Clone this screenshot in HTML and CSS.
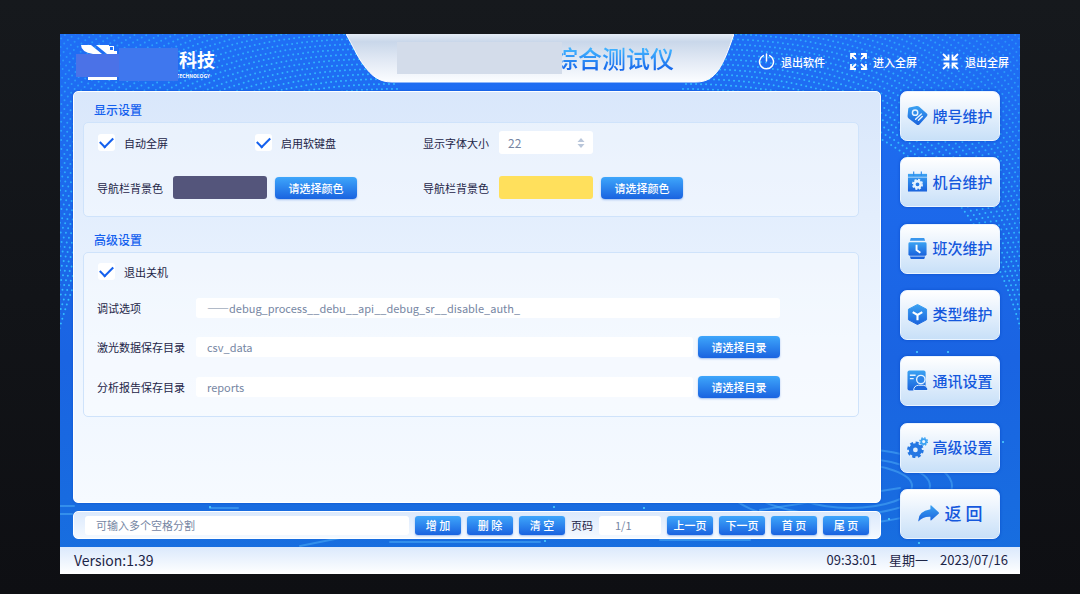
FILE: index.html
```html
<!DOCTYPE html>
<html lang="zh-CN">
<head>
  <meta charset="UTF-8">
  <title>综合测试仪</title>
  <link rel="stylesheet" href="styles.css">
</head>
<body>
  <div class="app">
    <svg class="backdrop" viewBox="0 0 960 540" preserveAspectRatio="none" aria-hidden="true">
      <g id="dots-right"></g>
      <g id="dots-left" transform="translate(960 0) scale(-1 1)"></g>
      <g class="ripples">
        <ellipse cx="790" cy="452" rx="62" ry="22"/>
        <ellipse cx="780" cy="452" rx="90" ry="29"/>
        <ellipse cx="780" cy="452" rx="112" ry="38"/>
        <path d="M0 472H14M0 480H12M150 474H178M330 508H480M700 476L840 454M240 512l40-8M600 506h90M905 484h25M895 492h30"/>
      </g>
      <g class="sparks">
        <circle cx="150" cy="473" r="1"/><circle cx="494" cy="473" r="1"/><circle cx="584" cy="474" r="1"/>
        <circle cx="829" cy="485" r="1"/><circle cx="859" cy="509" r="1"/><circle cx="888" cy="318" r="1"/>
        <circle cx="857" cy="318" r="1"/><circle cx="943" cy="408" r="1"/><circle cx="485" cy="507" r="1"/>
      </g>
    </svg>

    <header class="header">
      <div class="logo">
        <svg class="logo-mark" width="102" height="40" viewBox="0 0 102 40">
          <path fill="#fff" d="M5 3h10l11 9H17Q5 10 5 3zM20 3h13v1h5v5h3v3H31zM34 5v3h3V5z" fill-rule="evenodd"/>
          <path fill="#fff" d="M12 34h29v4H12z"/>
          <path fill="#4b72e7" d="M0 12h49v23H0z"/>
          <path fill="#3f77ee" d="M43 6h59v33H43z"/>
        </svg>
        <div class="logo-text">
          <span class="logo-name">科技</span>
          <span class="logo-sub">TECHNOLOGY</span>
        </div>
      </div>
      <div class="banner">
        <svg class="banner-shape" viewBox="0 0 388 49" preserveAspectRatio="none" aria-hidden="true">
          <defs>
            <linearGradient id="bannerFill" x1="0" y1="0" x2="0" y2="1">
              <stop offset="0" stop-color="#e4ecf6"/><stop offset=".16" stop-color="#c9d7ea"/>
              <stop offset=".5" stop-color="#dfe7f3"/><stop offset="1" stop-color="#fbfdff"/>
            </linearGradient>
          </defs>
          <path fill="url(#bannerFill)" stroke="#fff" d="M0 0C7 12 11 22 17 30C26 43 34 48 46 48H350C370 48 377 32 388 0"/>
        </svg>
        <span class="mask"></span>
        <h1>综合测试仪</h1>
      </div>
      <nav class="actions">
        <button>
          <svg width="17" height="17" viewBox="0 0 17 17" fill="none" stroke="#fff" stroke-width="1.5" stroke-linecap="round"><path d="M5.3 2.6A7 7 0 1 0 11.7 2.6M8.5 1v7"/></svg>
          退出软件
        </button>
        <button>
          <svg width="17" height="17" viewBox="0 0 17 17" fill="none" stroke="#fff" stroke-width="1.8"><path d="M1 6V1h5M1 1l5 5M11 1h5v5M16 1l-5 5M1 11v5h5M1 16l5-5M16 11v5h-5M16 16l-5-5"/></svg>
          进入全屏
        </button>
        <button>
          <svg width="17" height="17" viewBox="0 0 17 17" fill="none" stroke="#fff" stroke-width="1.8"><path d="M6.5 1.500v5h-5M6.500 6.500L1 1M10.500 1.500v5h5M10.500 6.500L16 1M6.500 15.500v-5h-5M6.500 10.500L1 16M10.500 15.500v-5h5M10.500 10.500L16 16"/></svg>
          退出全屏
        </button>
      </nav>
    </header>

    <div class="body">
      <div class="content">
        <main class="panel">
          <h2>显示设置</h2>
          <section class="group display-group">
            <label class="check"><input type="checkbox" checked>自动全屏</label>
            <label class="check"><input type="checkbox" checked>启用软键盘</label>
            <div class="field">
              <label for="fontSize">显示字体大小</label>
              <div class="spinner">
                <input id="fontSize" type="text" inputmode="numeric" value="22">
                <svg width="8" height="10" viewBox="0 0 8 10" fill="#b9c6da"><path d="M4 0l3.500 4h-7zM4 10l3.500-4h-7z"/></svg>
              </div>
            </div>
            <div class="field wide">
              <span>导航栏背景色</span>
              <span class="swatch swatch-purple"></span>
              <button class="btn btn-pick">请选择颜色</button>
            </div>
            <div class="field">
              <span>导航栏背景色</span>
              <span class="swatch swatch-yellow"></span>
              <button class="btn btn-pick">请选择颜色</button>
            </div>
          </section>

          <h2>高级设置</h2>
          <section class="group advanced-group">
            <label class="check"><input type="checkbox" checked>退出关机</label>
            <div class="path-row">
              <label for="debug">调试选项</label>
              <input id="debug" type="text" value="——debug_process__debu__api__debug_sr__disable_auth_">
            </div>
            <div class="path-row">
              <label for="csvDir">激光数据保存目录</label>
              <input id="csvDir" type="text" value="csv_data">
              <button class="btn btn-pick">请选择目录</button>
            </div>
            <div class="path-row">
              <label for="reportDir">分析报告保存目录</label>
              <input id="reportDir" type="text" value="reports">
              <button class="btn btn-pick">请选择目录</button>
            </div>
          </section>
        </main>

        <div class="toolbar">
          <input class="search" type="text" placeholder="可输入多个空格分割" aria-label="关键字">
          <button class="btn">增 加</button>
          <button class="btn">删 除</button>
          <button class="btn">清 空</button>
          <label for="page">页码</label>
          <input id="page" class="page" type="text" value="1/1">
          <button class="btn">上一页</button>
          <button class="btn">下一页</button>
          <button class="btn">首 页</button>
          <button class="btn">尾 页</button>
        </div>
      </div>

      <nav class="sidebar">
        <button>
          <svg viewBox="0 0 22 22">
            <defs>
              <linearGradient id="ico" x1="0" y1="0" x2="0" y2="1"><stop offset="0" stop-color="#3ba2f2"/><stop offset="1" stop-color="#1a63dd"/></linearGradient>
            </defs>
            <path fill="url(#ico)" d="M2.500 2.500L10 1q1.500-.3 2.500.7l8.500 7.500q1 1 0 2.200l-8 8.900q-1.500 1.300-3 0L1.500 14q-1-1-.9-2.500l.7-7.500q.1-1.300 1.200-1.500z"/>
            <g fill="none" stroke="#e6f3ff" stroke-width="1.500" stroke-linecap="round"><circle cx="8.500" cy="8" r="2.800"/><path d="M9 15l6-5.500M12 16l4-4"/></g>
          </svg>
          牌号维护
        </button>
        <button>
          <svg viewBox="0 0 22 22">
            <path fill="url(#ico)" d="M1 3h20v18.500H1z"/>
            <path stroke="#e6f3ff" stroke-width=".7" d="M1 6.500h20"/>
            <path stroke="#2f8cec" stroke-width="1.200" d="M7 .5V5M15 .5V5"/>
            <circle cx="11" cy="14" r="3.300" fill="none" stroke="#e6f3ff" stroke-width="2.600"/>
            <circle cx="11" cy="14" r="4.900" fill="none" stroke="#e6f3ff" stroke-width="1.800" stroke-dasharray="2.200 1.648"/>
          </svg>
          机台维护
        </button>
        <button>
          <svg viewBox="0 0 22 22">
            <path fill="#3996ed" d="M4 0h14l1 3H3z"/><path fill="#1a63dd" d="M3 19.500h16l-1 2.500H4z"/>
            <rect x="1.500" y="4.500" width="19" height="14" rx="1.500" fill="url(#ico)"/>
            <path fill="none" stroke="#fff" stroke-width="2" d="M10 7v5.500l4 3"/>
          </svg>
          班次维护
        </button>
        <button>
          <svg viewBox="0 0 22 22">
            <path fill="url(#ico)" stroke="url(#ico)" stroke-linejoin="round" d="M11 .5l9.500 5v11L11 21.500 1.500 16.500v-11z"/>
            <path fill="none" stroke="#fff" stroke-width="2.200" d="M6 8.500l5 3 5-3M11 11.500v5.500"/>
          </svg>
          类型维护
        </button>
        <button>
          <svg viewBox="0 0 22 22">
            <rect x=".5" y=".5" width="19" height="21" rx="2" fill="url(#ico)"/>
            <path stroke="#e6f3ff" stroke-width="1.400" d="M3 5.500h6M3 9h4"/>
            <circle cx="14.500" cy="10" r="4.400" fill="#2c84e8" stroke="#e6f3ff" stroke-width="1.400"/>
            <path fill="#1d69de" stroke="#e6f3ff" d="M7 21.500q0-5 5-5.500h5q4.500.5 5 5.500z"/>
          </svg>
          通讯设置
        </button>
        <button>
          <svg viewBox="0 0 22 22">
            <circle cx="8.800" cy="13.500" r="4.700" fill="none" stroke="#2577e3" stroke-width="4.400"/>
            <circle cx="8.800" cy="13.500" r="7.300" fill="none" stroke="#2577e3" stroke-width="2.800" stroke-dasharray="3.200 2.533"/>
            <circle cx="17.500" cy="4.800" r="2.600" fill="none" stroke="#3ba2f2" stroke-width="1.800"/>
            <circle cx="17.500" cy="4.800" r="3.900" fill="none" stroke="#3ba2f2" stroke-width="1.500" stroke-dasharray="1.600 1.463"/>
          </svg>
          高级设置
        </button>
        <button class="back">
          <svg viewBox="0 0 22 22"><path fill="url(#ico)" d="M13 3q0-1 1-.3l7.600 7q.8.8 0 1.600L14 18q-1 .6-1-.4v-3.200Q5 14 .4 19.500-.5 9 13 6.600z"/></svg>
          返 回
        </button>
      </nav>
    </div>

    <footer class="statusbar">
      <span class="version">Version:1.39</span>
      <span>09:33:01</span>
      <span>星期一</span>
      <span>2023/07/16</span>
    </footer>
  </div>

  <script>
    // dotted waves in the upper corners, the left side mirrors the right one
    function drawWaves(id) {
      const group = document.getElementById(id);
      for (let k = 0; k < 50; k++) {
        const path = document.createElementNS("http://www.w3.org/2000/svg", "path");
        path.setAttribute("d", "M620 60C780 60 915 120 962 300");
        path.setAttribute("transform", `translate(${k * 3} ${-k * 5})`);
        path.setAttribute("opacity", Math.max(0.45, 1 - k * 0.02));
        group.appendChild(path);
      }
    }
    drawWaves("dots-right");
    drawWaves("dots-left");
  </script>
</body>
</html>
```
FILE: styles.css
```css
* {
  box-sizing: border-box;
}
body {
  margin: 0;
  min-height: 100vh;
  padding: 34px 60px 20px;
  display: flex;
  background: linear-gradient(#16191d, #0e0f13);
  font-family: "Noto Sans CJK SC", sans-serif;
  font-size: 11px;
  line-height: 16px;
  color: #1d2547;
}
button,
input {
  font: inherit;
  border: none;
  padding: 0;
  margin: 0;
}
button {
  cursor: pointer;
}
.app {
  position: relative;
  flex: 1;
  display: flex;
  flex-direction: column;
  overflow: hidden;
  background: linear-gradient(#1f6ef5, #1a64e2 60%, #176fdf);
}

/* backdrop */
.backdrop {
  position: absolute;
  top: 0;
  left: 0;
  width: 100%;
  height: 100%;
}
.backdrop path {
  fill: none;
  stroke: #33bdff;
  stroke-width: 2;
  stroke-linecap: round;
  stroke-dasharray: 0 5;
}
.backdrop .ripples ellipse,
.backdrop .ripples path {
  fill: none;
  stroke: #4fb2f8;
  stroke-width: 2;
  stroke-dasharray: none;
  opacity: 0.5;
}
.sparks {
  fill: #4fd6ff;
}

/* header */
.header {
  position: relative;
  display: grid;
  grid-template-columns: 1fr 388px 1fr;
  height: 57px;
}
.logo {
  display: flex;
  padding: 8px 0 0 16px;
  color: #fff;
}
.logo-mark {
  position: relative;
  z-index: 1;
}
.logo-text {
  display: flex;
  flex-direction: column;
  align-items: flex-end;
  gap: 4px;
  margin-left: -2px;
  padding-top: 7px;
}
.logo-name {
  font-size: 18px;
  line-height: 20px;
  font-weight: 700;
}
.logo-sub {
  padding-right: 5px;
  font-size: 5px;
  line-height: 6px;
  font-weight: 700;
}
.banner {
  position: relative;
  display: flex;
  height: 49px;
  padding: 8px 0 0 51px;
}
.banner-shape {
  position: absolute;
  top: 0;
  left: 0;
  width: 100%;
  height: 100%;
}
.mask {
  position: relative;
  z-index: 1;
  width: 165px;
  height: 32px;
  background: #d3dcea;
}
.banner h1 {
  position: relative;
  margin: 0 0 0 -8px;
  font-size: 24px;
  line-height: 32px;
  font-weight: 500;
  background: linear-gradient(#3fb0ff 20%, #0d55e6 80%);
  -webkit-background-clip: text;
  background-clip: text;
  color: transparent;
}
.actions {
  display: flex;
  justify-content: flex-end;
  align-items: center;
  gap: 25px;
  padding: 0 11px 2px 0;
}
.actions button {
  display: flex;
  align-items: center;
  gap: 6px;
  background: none;
  color: #fff;
  font-weight: 500;
}

/* main area */
.body {
  position: relative;
  flex: 1;
  display: flex;
  gap: 19px;
  padding: 0 20px 8px 13px;
}
.content {
  flex: 1;
  display: flex;
  flex-direction: column;
  gap: 8px;
}
.panel {
  flex: 1;
  padding: 10px 21px 12px 9px;
  border: 1px solid #fff;
  border-radius: 5px;
  background: linear-gradient(#d9e7fb, #edf5ff 60%, #f6faff);
  box-shadow: 0 0 2px #0a4cc8;
}
.panel h2 {
  margin: 0 0 4px 11px;
  font-size: 12px;
  line-height: 16px;
  font-weight: 500;
  color: #1460ee;
}
.group {
  border: 1px solid #cfe3fb;
  border-radius: 5px;
  background: rgba(255, 255, 255, 0.4);
}
.display-group {
  display: grid;
  grid-template-columns: 157px 169px 1fr;
  row-gap: 22px;
  padding: 8px 13px 17px;
  margin-bottom: 15px;
}
.advanced-group {
  display: flex;
  flex-direction: column;
  gap: 18px;
  padding: 10px 78px 18px 13px;
}
.check {
  display: flex;
  align-items: center;
  gap: 9px;
}
.check input {
  appearance: none;
  width: 17px;
  height: 17px;
  margin-left: 1px;
  border-radius: 3px;
  background: #fff;
  display: flex;
  align-items: center;
  justify-content: center;
}
.check input:checked::before {
  content: "";
  width: 11px;
  height: 6px;
  margin-top: -3px;
  border: solid #1460ee;
  border-width: 0 0 2px 2px;
  transform: rotate(-45deg);
}
.field {
  display: flex;
  align-items: center;
  gap: 8px;
}
.field > :first-child {
  width: 68px;
}
.wide {
  grid-column: span 2;
}
.spinner {
  display: flex;
  align-items: center;
  width: 94px;
  height: 23px;
  padding: 0 8px 0 9px;
  border-radius: 3px;
  background: #fff;
}
.spinner input {
  flex: 1;
  min-width: 0;
  font-size: 12px;
  background: none;
  color: #7686a3;
}
.swatch {
  width: 94px;
  height: 23px;
  border-radius: 3px;
}
.swatch-purple {
  background: #54557b;
}
.swatch-yellow {
  background: #ffe05c;
}
.btn {
  width: 46px;
  height: 19px;
  border-radius: 3px;
  background: linear-gradient(#3ea6fb, #1a63e0);
  box-shadow: 0 1px 2px rgba(40, 110, 220, 0.4);
  color: #fff;
  font-weight: 500;
  white-space: nowrap;
}
.btn-pick {
  width: 82px;
  height: 22px;
  border-radius: 4px;
}
.path-row {
  display: flex;
  align-items: center;
  gap: 5px;
}
.path-row label {
  width: 94px;
}
.path-row input {
  flex: 1;
  height: 20px;
  padding: 0 11px;
  border-radius: 3px;
  background: #fff;
  color: #7686a3;
}

/* toolbar */
.toolbar {
  display: flex;
  align-items: center;
  gap: 6px;
  height: 28px;
  padding: 0 11px;
  border: 1px solid #fff;
  border-radius: 5px;
  background: linear-gradient(#dbe9fc, #f4f9ff);
}
.toolbar input {
  height: 19px;
  border-radius: 3px;
  background: #fff;
  color: #7686a3;
}
.toolbar .search {
  flex: 1;
  min-width: 0;
  padding: 0 11px;
}
.search::placeholder {
  color: #7686a3;
}
.toolbar .page {
  width: 62px;
  padding: 0 16px;
}

/* sidebar */
.sidebar {
  display: flex;
  flex-direction: column;
  justify-content: space-between;
}
.sidebar button {
  display: flex;
  align-items: center;
  justify-content: center;
  gap: 4px;
  width: 100px;
  height: 50px;
  padding-bottom: 1px;
  border: 1px solid #eaf4ff;
  border-radius: 7px;
  background: linear-gradient(#fff, #e3effc 50%, #c8e0f8);
  box-shadow: 0 0 3px #0a4cc8;
  font-size: 15px;
  font-weight: 500;
  color: #1558dd;
}
.sidebar svg {
  width: 21px;
  height: 21px;
}
.sidebar .back {
  gap: 6px;
  font-size: 17px;
}

/* status bar */
.statusbar {
  position: relative;
  display: flex;
  align-items: center;
  gap: 12px;
  height: 27px;
  padding: 0 12px 1px 14px;
  background: linear-gradient(#dbe9fc, #fff);
  font-size: 13px;
}
.version {
  margin-right: auto;
  font-size: 14px;
}
```
